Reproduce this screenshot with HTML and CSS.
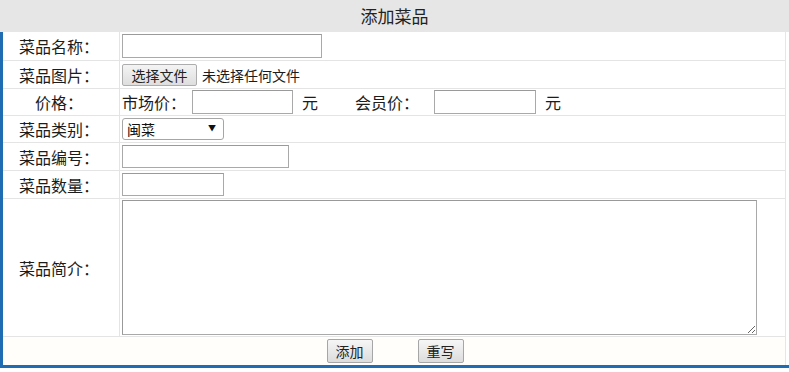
FILE: index.html
```html
<!DOCTYPE html>
<html lang="zh-CN">
<head>
<meta charset="utf-8">
<title>添加菜品</title>
<link rel="stylesheet" href="styles.css">
</head>
<body>
<div class="title">添加菜品</div>
<form class="frame">
  <div class="grid">
    <div class="row r29">
      <div class="label">菜品名称：</div>
      <div class="value"><input type="text" class="txt w200 h24"></div>
    </div>
    <div class="row r28">
      <div class="label">菜品图片：</div>
      <div class="value"><button type="button" class="filebtn">选择文件</button><span class="nofile">未选择任何文件</span></div>
    </div>
    <div class="row r27">
      <div class="label">价格：</div>
      <div class="value">
        <span class="pl">市场价：</span><input type="text" class="txt w100 h24 price"><span class="yuan">元</span>
        <span class="pl member">会员价：</span><input type="text" class="txt w101 h24 price2"><span class="yuan">元</span>
      </div>
    </div>
    <div class="row r27">
      <div class="label">菜品类别：</div>
      <div class="value">
        <span class="select"><select class="sel"><option>闽菜</option><option>川菜</option><option>粤菜</option></select></span>
      </div>
    </div>
    <div class="row r28">
      <div class="label">菜品编号：</div>
      <div class="value"><input type="text" class="txt w167 h23"></div>
    </div>
    <div class="row r28">
      <div class="label">菜品数量：</div>
      <div class="value"><input type="text" class="txt w101 h23"></div>
    </div>
    <div class="row r138">
      <div class="label">菜品简介：</div>
      <div class="value"><textarea class="area"></textarea></div>
    </div>
    <div class="row r28 last">
      <div class="actions">
        <button type="submit" class="btn">添加</button>
        <button type="reset" class="btn">重写</button>
      </div>
    </div>
  </div>
</form>
</body>
</html>
```
FILE: styles.css
```css
html, body {
  margin: 0;
  padding: 0;
  background: #ffffff;
}
body {
  width: 789px;
  font-family: "Noto Sans CJK SC", "Microsoft YaHei", sans-serif;
  font-size: 16px;
  color: #1c1c1c;
}
.title {
  height: 32px;
  line-height: 32px;
  background: #e6e6e6;
  text-align: center;
  font-size: 17px;
  color: #222;
}
.frame {
  margin: 0;
  border-left: 3px solid #1f6cb3;
  border-bottom: 3px solid #1f6cb3;
}
.grid {
  width: 782px;
  border-right: 1px solid #e6e6e6;
}
.row {
  display: grid;
  grid-template-columns: 117px 1fr;
  box-sizing: border-box;
  border-bottom: 1px solid #e4e4e4;
}
.row.last {
  display: flex;
  border-bottom: none;
  background: #fffefa;
}
.r27 { height: 27px; }
.r28 { height: 28px; }
.r29 { height: 29px; }
.r138 { height: 138px; }
.label {
  display: flex;
  align-items: center;
  justify-content: center;
  border-right: 1px solid #e4e4e4;
  line-height: 1;
  padding-right: 4px;
  box-sizing: border-box;
}
.value {
  display: flex;
  align-items: center;
  padding-left: 2px;
  line-height: 1;
}
.txt {
  box-sizing: border-box;
  margin: 0;
  padding: 1px 2px;
  border: 1px solid #a9a9a9;
  border-top-color: #9a9a9a;
  background: #fff;
  font: 14px "Noto Sans CJK SC", sans-serif;
}
.w200 { width: 200px; }
.w100 { width: 101px; }
.w101 { width: 102px; }
.w167 { width: 167px; }
.h24 { height: 24px; }
.h23 { height: 23px; }
.filebtn {
  box-sizing: border-box;
  margin: 0;
  width: 75px;
  height: 22px;
  padding: 0;
  border: 1px solid #adadad;
  border-radius: 2px;
  background: linear-gradient(#f4f4f4, #dedede);
  font: 14px "Noto Sans CJK SC", sans-serif;
  color: #222;
  line-height: 20px;
}
.nofile {
  margin-left: 5px;
  font-size: 14px;
  color: #1c1c1c;
}
.pl {
  font-size: 16px;
}
.price { margin-left: 6px; }
.yuan {
  margin-left: 9px;
}
.member {
  margin-left: 37px;
}
.price2 { margin-left: 15px; }
.select {
  position: relative;
  display: inline-block;
}
.select::after {
  content: "▼";
  position: absolute;
  right: 8px;
  top: 6px;
  font-size: 8px;
  line-height: 1;
  color: #111;
  pointer-events: none;
}
.sel {
  -webkit-appearance: none;
  appearance: none;
  box-sizing: border-box;
  width: 102px;
  height: 22px;
  margin: 0;
  padding: 0 0 0 4px;
  border: 1px solid #a6a6a6;
  border-radius: 3px;
  background: #fff;
  font: 14px "Noto Sans CJK SC", sans-serif;
  color: #111;
}
.area {
  box-sizing: border-box;
  display: block;
  width: 635px;
  height: 135px;
  margin: 0;
  padding: 2px;
  border: 1px solid #a9a9a9;
  border-top-color: #999;
  border-left-color: #999;
  resize: both;
  font: 14px "Noto Sans CJK SC", sans-serif;
}
.r138 .value {
  align-items: flex-start;
  padding-top: 1px;
}
.actions {
  flex: 1;
  display: flex;
  justify-content: center;
  align-items: center;
  gap: 45px;
  padding-left: 2px;
}
.btn {
  box-sizing: border-box;
  margin: 0;
  width: 46px;
  height: 24px;
  padding: 0;
  border: 1px solid #a6a6a6;
  border-radius: 2px;
  background: linear-gradient(#f6f6f6, #dcdcdc);
  font: 14px "Noto Sans CJK SC", sans-serif;
  color: #222;
  line-height: 22px;
}
```
